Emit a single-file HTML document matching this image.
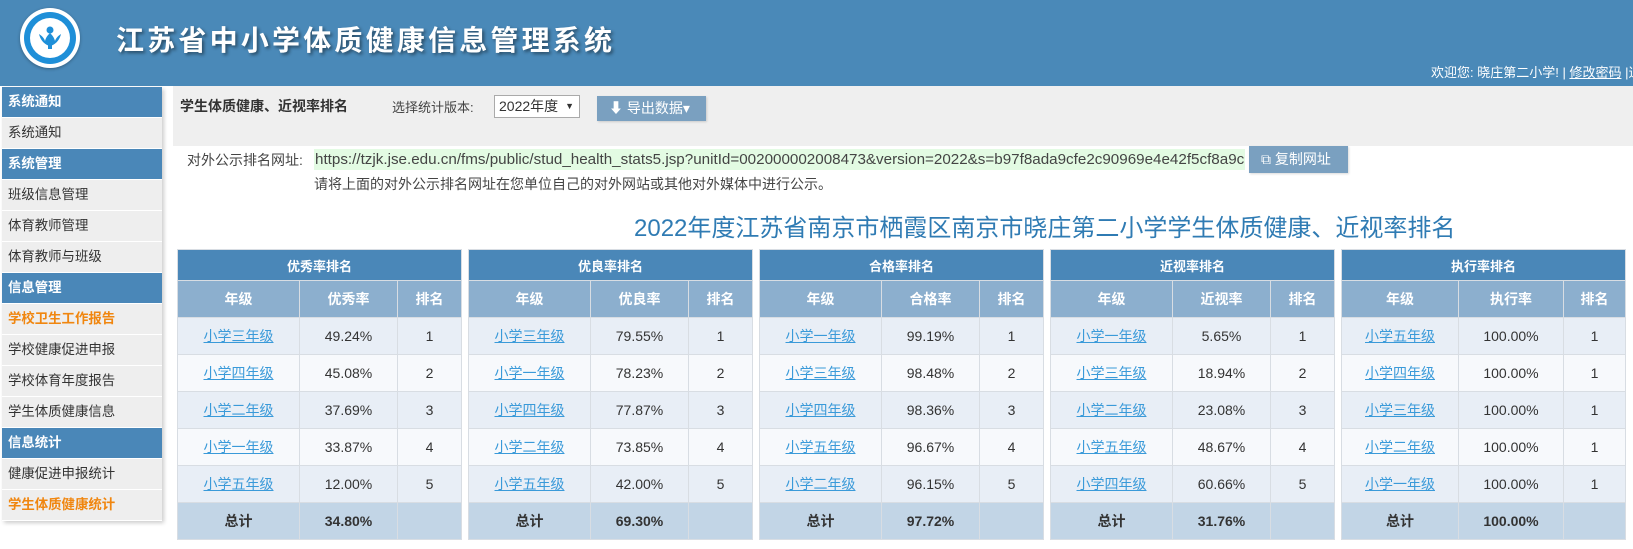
<!DOCTYPE html>
<html><head><meta charset="utf-8"><style>
*{margin:0;padding:0;box-sizing:border-box}
body{width:1633px;height:549px;overflow:hidden;background:#fff;font-family:"Liberation Sans","Noto Sans CJK SC",sans-serif;font-size:13px;color:#333;position:relative}
.hd{position:absolute;left:0;top:0;width:1633px;height:86px;background:#4a89b8}
.logo{position:absolute;left:20px;top:8px;width:60px;height:60px;border-radius:50%;background:#fff;box-shadow:0 1px 3px rgba(0,0,0,.3)}
.logo .r{position:absolute;left:4px;top:4px;width:52px;height:52px;border-radius:50%;background:#1e8fd8}
.logo .c{position:absolute;left:10px;top:10px;width:40px;height:40px;border-radius:50%;background:#fff}
.ttl{position:absolute;left:116px;top:19px;color:#fff;font-size:28px;letter-spacing:3.2px;font-weight:bold;text-shadow:2px 2px 3px rgba(0,0,0,.45);font-family:"Noto Sans CJK SC",sans-serif}
.wel{position:absolute;left:1431px;top:62px;color:#fff;font-size:13px;white-space:nowrap;width:202px;overflow:hidden}
.wel u{text-decoration:underline}
.sb{position:absolute;left:2px;top:87px;width:160px;box-shadow:2px 2px 4px rgba(0,0,0,.2)}
.sb div{height:31px;line-height:30px;padding-left:6px;border-bottom:1px solid #fff;background:#eeeeee;color:#333;font-size:13.4px}
.sb .h{background:#4a87b8;color:#fff;font-weight:bold}
.sb .o{color:#f0860f;font-weight:bold}
.bar{position:absolute;left:173px;top:86px;width:1460px;height:60px;background:#efefef}
.bt{position:absolute;left:180px;top:96px;font-weight:bold;font-size:14px;color:#333}
.lb{position:absolute;left:392px;top:97px;color:#444}
.sel{position:absolute;left:494px;top:95px;width:86px;height:23px;border:1px solid #aaa;background:#fff;font-size:14px;padding-left:4px;line-height:21px}
.sel span{position:absolute;right:5px;top:0;font-size:9px}
.exp{position:absolute;left:597px;top:96px;width:109px;height:25px;background:#7aa0c0;color:#fff;font-size:14px;line-height:25px;padding-left:12px;box-shadow:1px 1px 2px rgba(0,0,0,.15)}
.ul{position:absolute;left:187px;top:150px;color:#444;font-size:14px}
.url{position:absolute;left:314px;top:149px;height:21px;line-height:21px;background:#e3fbe3;color:#444;font-size:15.2px;white-space:nowrap;padding:0 1px}
.cp{position:absolute;left:1249px;top:146px;width:99px;height:27px;background:#7aa0c0;color:#fff;font-size:14px;line-height:27px;padding-left:12px;box-shadow:1px 1px 2px rgba(0,0,0,.15)}
.nt{position:absolute;left:314px;top:174px;color:#444;font-size:14px}
.big{position:absolute;left:634px;top:208px;font-size:24px;color:#2f7bb3;white-space:nowrap}
table{position:absolute;top:249px;width:285px;border-collapse:collapse;font-size:14px;text-align:center}
td,th{border:1px solid #d8dde3}
th.g{background:#4a87b8;color:#fff;height:31px;font-size:13px}
th.c{background:#8cafce;color:#fff;height:37px;font-size:14px}
td{height:37px;color:#333}
tr.a td{background:#e8eef6}
tr.b td{background:#f7f9fc}
tr.t td{background:#c2d5e6;font-weight:bold}
a{color:#3a9ad9;text-decoration:underline}
</style></head><body>
<div class="hd">
<div class="logo"><div class="r"></div><div class="c"><svg width="40" height="40" viewBox="0 0 40 40"><path d="M9 16c2 8 7 11 11 12c4-1 9-4 11-12c-3 2-5 4-6 7c-1-4-3-6-5-8c-2 2-4 4-5 8c-1-3-3-5-6-7z" fill="#1e8fd8"/><circle cx="20" cy="12" r="3.5" fill="#1e8fd8"/><path d="M18 17h4v14h-4z" fill="#1e8fd8"/></svg></div></div>
<div class="ttl">江苏省中小学体质健康信息管理系统</div>
<div class="wel">欢迎您: 晓庄第二小学! | <u>修改密码</u> |退出</div>
</div>
<div class="sb">
<div class="h">系统通知</div><div>系统通知</div><div class="h">系统管理</div><div>班级信息管理</div><div>体育教师管理</div><div>体育教师与班级</div><div class="h">信息管理</div><div class="o">学校卫生工作报告</div><div>学校健康促进申报</div><div>学校体育年度报告</div><div>学生体质健康信息</div><div class="h">信息统计</div><div>健康促进申报统计</div><div class="o">学生体质健康统计</div>
</div>
<div class="bar"></div>
<div class="bt">学生体质健康、近视率排名</div>
<div class="lb">选择统计版本:</div>
<div class="sel">2022年度<span>▼</span></div>
<div class="exp">⬇ 导出数据▾</div>
<div class="ul">对外公示排名网址:</div>
<div class="url">https://tzjk.jse.edu.cn/fms/public/stud_health_stats5.jsp?unitId=002000002008473&amp;version=2022&amp;s=b97f8ada9cfe2c90969e4e42f5cf8a9c</div>
<div class="cp">⧉ 复制网址</div>
<div class="nt">请将上面的对外公示排名网址在您单位自己的对外网站或其他对外媒体中进行公示。</div>
<div class="big">2022年度江苏省南京市栖霞区南京市晓庄第二小学学生体质健康、近视率排名</div>

<table style="left:177px"><colgroup><col style="width:122px"><col style="width:98px"><col></colgroup>
<tr><th class="g" colspan="3">优秀率排名</th></tr>
<tr><th class="c">年级</th><th class="c">优秀率</th><th class="c">排名</th></tr>
<tr class="a"><td><a>小学三年级</a></td><td>49.24%</td><td>1</td></tr>
<tr class="b"><td><a>小学四年级</a></td><td>45.08%</td><td>2</td></tr>
<tr class="a"><td><a>小学二年级</a></td><td>37.69%</td><td>3</td></tr>
<tr class="b"><td><a>小学一年级</a></td><td>33.87%</td><td>4</td></tr>
<tr class="a"><td><a>小学五年级</a></td><td>12.00%</td><td>5</td></tr>
<tr class="t"><td>总计</td><td>34.80%</td><td></td></tr></table>

<table style="left:468px"><colgroup><col style="width:122px"><col style="width:98px"><col></colgroup>
<tr><th class="g" colspan="3">优良率排名</th></tr>
<tr><th class="c">年级</th><th class="c">优良率</th><th class="c">排名</th></tr>
<tr class="a"><td><a>小学三年级</a></td><td>79.55%</td><td>1</td></tr>
<tr class="b"><td><a>小学一年级</a></td><td>78.23%</td><td>2</td></tr>
<tr class="a"><td><a>小学四年级</a></td><td>77.87%</td><td>3</td></tr>
<tr class="b"><td><a>小学二年级</a></td><td>73.85%</td><td>4</td></tr>
<tr class="a"><td><a>小学五年级</a></td><td>42.00%</td><td>5</td></tr>
<tr class="t"><td>总计</td><td>69.30%</td><td></td></tr></table>

<table style="left:759px"><colgroup><col style="width:122px"><col style="width:98px"><col></colgroup>
<tr><th class="g" colspan="3">合格率排名</th></tr>
<tr><th class="c">年级</th><th class="c">合格率</th><th class="c">排名</th></tr>
<tr class="a"><td><a>小学一年级</a></td><td>99.19%</td><td>1</td></tr>
<tr class="b"><td><a>小学三年级</a></td><td>98.48%</td><td>2</td></tr>
<tr class="a"><td><a>小学四年级</a></td><td>98.36%</td><td>3</td></tr>
<tr class="b"><td><a>小学五年级</a></td><td>96.67%</td><td>4</td></tr>
<tr class="a"><td><a>小学二年级</a></td><td>96.15%</td><td>5</td></tr>
<tr class="t"><td>总计</td><td>97.72%</td><td></td></tr></table>

<table style="left:1050px"><colgroup><col style="width:122px"><col style="width:98px"><col></colgroup>
<tr><th class="g" colspan="3">近视率排名</th></tr>
<tr><th class="c">年级</th><th class="c">近视率</th><th class="c">排名</th></tr>
<tr class="a"><td><a>小学一年级</a></td><td>5.65%</td><td>1</td></tr>
<tr class="b"><td><a>小学三年级</a></td><td>18.94%</td><td>2</td></tr>
<tr class="a"><td><a>小学二年级</a></td><td>23.08%</td><td>3</td></tr>
<tr class="b"><td><a>小学五年级</a></td><td>48.67%</td><td>4</td></tr>
<tr class="a"><td><a>小学四年级</a></td><td>60.66%</td><td>5</td></tr>
<tr class="t"><td>总计</td><td>31.76%</td><td></td></tr></table>

<table style="left:1341px"><colgroup><col style="width:117px"><col style="width:105px"><col></colgroup>
<tr><th class="g" colspan="3">执行率排名</th></tr>
<tr><th class="c">年级</th><th class="c">执行率</th><th class="c">排名</th></tr>
<tr class="a"><td><a>小学五年级</a></td><td>100.00%</td><td>1</td></tr>
<tr class="b"><td><a>小学四年级</a></td><td>100.00%</td><td>1</td></tr>
<tr class="a"><td><a>小学三年级</a></td><td>100.00%</td><td>1</td></tr>
<tr class="b"><td><a>小学二年级</a></td><td>100.00%</td><td>1</td></tr>
<tr class="a"><td><a>小学一年级</a></td><td>100.00%</td><td>1</td></tr>
<tr class="t"><td>总计</td><td>100.00%</td><td></td></tr></table>
</body></html>
